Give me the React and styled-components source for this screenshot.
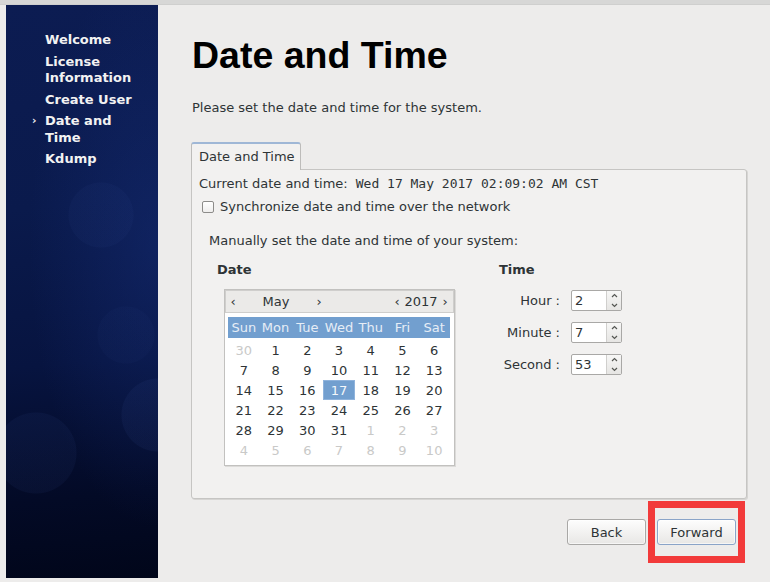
import React from 'react'
import styled, { createGlobalStyle, css } from 'styled-components'

const GlobalStyle = createGlobalStyle`
  html, body {
    margin: 0;
    padding: 0;
    background: #edeceb;
  }
  * { box-sizing: border-box; }
`

const Page = styled.div`
  width: 770px;
  height: 582px;
  overflow: hidden;
  display: flex;
  flex-direction: column;
  background: #edeceb;
  font-family: "DejaVu Sans", "Noto Sans", sans-serif;
  font-size: 13px;
  color: #2e3436;
`

const TopStrip = styled.div`
  height: 5px;
  flex: none;
  background: #d7d7d6;
  border-bottom: 1px solid #cfcfce;
`

const Body = styled.div`
  flex: 1;
  display: flex;
  min-height: 0;
`

const Sidebar = styled.div`
  width: 152px;
  margin: 0 0 4px 6px;
  padding: 27px 0 0 39px;
  background:
    radial-gradient(circle at 30px 448px, rgba(70, 100, 180, 0.07) 0 40px, transparent 41px),
    radial-gradient(circle at 152px 410px, rgba(70, 100, 180, 0.08) 0 36px, transparent 37px),
    radial-gradient(circle at 95px 210px, rgba(70, 100, 180, 0.05) 0 32px, transparent 33px),
    radial-gradient(circle at 120px 330px, rgba(70, 100, 180, 0.04) 0 28px, transparent 29px),
    radial-gradient(ellipse at 100% 42%, rgba(25, 50, 130, 0.4), transparent 60%),
    linear-gradient(175deg, #0c1c52 0%, #0a1a4c 35%, #071440 62%, #030a26 85%, #01061a 100%);
  display: flex;
  flex-direction: column;
  gap: 5px;
`

const NavItem = styled.div`
  position: relative;
  max-width: 100px;
  color: #f2f2f2;
  font-weight: bold;
  font-size: 13px;
  line-height: 16.5px;
  ${p => p.$active && css`
    &::before {
      content: '›';
      position: absolute;
      left: -13px;
      top: 0;
      font-size: 11px;
    }
  `}
`

const Main = styled.div`
  flex: 1;
  padding: 29px 23px 0 34px;
  display: flex;
  flex-direction: column;
`

const Title = styled.h1`
  margin: 0;
  font-family: "Liberation Sans", Arial, sans-serif;
  font-size: 37.5px;
  line-height: 43px;
  font-weight: bold;
  color: #000;
`

const Intro = styled.p`
  margin: 23px 0 0;
  line-height: 16px;
`

const Tabs = styled.div`
  margin: 26px 0 0 -1px;
  display: flex;
`

const Tab = styled.div`
  height: 28px;
  padding: 4px 5px 0 7px;
  line-height: 17px;
  background: #f2f1f0;
  border: 1px solid #bdbcba;
  border-top: 2px solid #9fb7d6;
  border-bottom: none;
  border-radius: 3px 3px 0 0;
  margin-bottom: -1px;
  position: relative;
  z-index: 1;
`

const Panel = styled.div`
  margin-left: -1px;
  height: 330px;
  background: #f2f1f0;
  border: 1px solid #c6c5c3;
  border-radius: 0 3px 3px 3px;
  box-shadow: 1px 1px 0 #d6d5d3;
  padding: 6px 0 0 7px;
`

const Line = styled.div`
  line-height: 16px;
  display: flex;
  align-items: center;
`

const Mono = styled.span`
  font-family: "DejaVu Sans Mono", "Liberation Mono", monospace;
  font-size: 13px;
  margin-left: 8px;
`

const CheckRow = styled(Line)`
  margin-top: 7px;
  padding-left: 3px;
  gap: 6px;
`

const CheckBox = styled.span`
  width: 12px;
  height: 12px;
  border: 1px solid #8d8c8a;
  border-radius: 2px;
  background: linear-gradient(#fff, #efeeed);
`

const Manual = styled.div`
  margin-top: 18px;
  padding-left: 10px;
`

const Columns = styled.div`
  margin-top: 13px;
  padding-left: 8px;
  display: flex;
`

const DateCol = styled.div`
  width: 282px;
`

const Heading = styled.div`
  font-weight: bold;
  line-height: 16px;
`

const CalendarBox = styled.div`
  margin: 11px 0 0 7px;
  width: 231px;
  background: #fff;
  border: 1px solid #c2c1bf;
  box-shadow: 1px 1px 0 #dcdbd9;
`

const CalHeader = styled.div`
  height: 23px;
  background: #ebeae8;
  border: 1px solid #cfcecc;
  display: flex;
  align-items: center;
  justify-content: space-between;
  padding: 0 4px 0 3px;
  color: #2e3436;
`

const Nav = styled.div`
  display: flex;
  align-items: center;
`

const Arrow = styled.span`
  font-size: 13px;
  width: 8px;
  text-align: center;
`

const NavLabel = styled.span`
  width: ${p => p.$w}px;
  text-align: center;
`

const CalBody = styled.div`
  padding: 4px 4px 5px 4px;
`

const Grid = styled.div`
  display: grid;
  grid-template-columns: repeat(7, 1fr);
  grid-auto-rows: 20px;
  margin-left: -1px;
`

const DayNames = styled(Grid)`
  grid-auto-rows: 21px;
  background: #729fcf;
  margin-bottom: 2px;
`

const DayName = styled.div`
  display: flex;
  align-items: center;
  justify-content: center;
  color: #e6edf6;
`

const Day = styled.div`
  display: flex;
  align-items: center;
  justify-content: center;
  color: ${p => (p.$other ? '#c9c9c8' : '#2e3436')};
  ${p => p.$selected && css`
    background: #729fcf;
    color: #f4f7fb;
    border: 1px solid #8fb3dc;
  `}
`

const TimeCol = styled.div`
  display: flex;
  flex-direction: column;
`

const TimeGrid = styled.div`
  margin-top: 12px;
  display: grid;
  grid-template-columns: 61px auto;
  column-gap: 11px;
  row-gap: 11px;
  align-items: center;
`

const TimeLabel = styled.div`
  text-align: right;
`

const Spin = styled.div`
  width: 51px;
  height: 21px;
  display: flex;
  border: 1px solid #a9a8a6;
  border-radius: 2px;
  background: #fff;
`

const SpinValue = styled.div`
  flex: 1;
  padding-left: 3px;
  line-height: 19px;
  color: #2e3436;
`

const SpinArrows = styled.div`
  width: 15px;
  display: flex;
  flex-direction: column;
  border-left: 1px solid #d0cfcd;
  background: linear-gradient(#f7f7f6, #e6e5e3);
`

const SpinBtn = styled.div`
  flex: 1;
  display: flex;
  align-items: center;
  justify-content: center;
`

const Buttons = styled.div`
  margin: 20px 11px 0 0;
  display: flex;
  justify-content: flex-end;
  gap: 11px;
`

const Button = styled.button`
  position: relative;
  width: 79px;
  height: 26px;
  font-family: "DejaVu Sans", sans-serif;
  font-size: 13px;
  color: #2e3436;
  border: 1px solid ${p => (p.$focus ? '#8aa4c8' : '#a9a8a6')};
  border-radius: 3px;
  background: linear-gradient(#fdfdfd, #e8e7e5);
  box-shadow: inset 0 0 0 1px rgba(255, 255, 255, 0.6);
  padding: 0;
`

const Highlight = styled.span`
  position: relative;
  display: inline-flex;
  &::after {
    content: '';
    position: absolute;
    left: -9px;
    right: -9px;
    top: -18px;
    bottom: -18px;
    border: 7px solid #f23a3a;
    pointer-events: none;
  }
`

const Chevron = ({ up }) => (
  <svg width="7" height="5" viewBox="0 0 7 5">
    <polyline
      points={up ? '1,4 3.5,1.5 6,4' : '1,1 3.5,3.5 6,1'}
      fill="none"
      stroke="#555753"
      strokeWidth="1.2"
    />
  </svg>
)

const SpinBox = ({ value }) => (
  <Spin>
    <SpinValue>{value}</SpinValue>
    <SpinArrows>
      <SpinBtn><Chevron up /></SpinBtn>
      <SpinBtn><Chevron /></SpinBtn>
    </SpinArrows>
  </Spin>
)

const weeks = [
  [30, 1, 2, 3, 4, 5, 6],
  [7, 8, 9, 10, 11, 12, 13],
  [14, 15, 16, 17, 18, 19, 20],
  [21, 22, 23, 24, 25, 26, 27],
  [28, 29, 30, 31, 1, 2, 3],
  [4, 5, 6, 7, 8, 9, 10],
]

const App = () => {
  return (
    <>
      <GlobalStyle />
      <Page>
        <TopStrip />
        <Body>
          <Sidebar>
            <NavItem>Welcome</NavItem>
            <NavItem>License Information</NavItem>
            <NavItem>Create User</NavItem>
            <NavItem $active>Date and Time</NavItem>
            <NavItem>Kdump</NavItem>
          </Sidebar>
          <Main>
            <Title>Date and Time</Title>
            <Intro>Please set the date and time for the system.</Intro>
            <Tabs>
              <Tab>Date and Time</Tab>
            </Tabs>
            <Panel>
              <Line>
                Current date and time: <Mono>Wed 17 May 2017 02:09:02 AM CST</Mono>
              </Line>
              <CheckRow>
                <CheckBox />
                Synchronize date and time over the network
              </CheckRow>
              <Manual>
                <Line>Manually set the date and time of your system:</Line>
                <Columns>
                  <DateCol>
                    <Heading>Date</Heading>
                    <CalendarBox>
                      <CalHeader>
                        <Nav>
                          <Arrow>‹</Arrow>
                          <NavLabel $w={78}>May</NavLabel>
                          <Arrow>›</Arrow>
                        </Nav>
                        <Nav>
                          <Arrow>‹</Arrow>
                          <NavLabel $w={40}>2017</NavLabel>
                          <Arrow>›</Arrow>
                        </Nav>
                      </CalHeader>
                      <CalBody>
                        <DayNames>
                          {['Sun', 'Mon', 'Tue', 'Wed', 'Thu', 'Fri', 'Sat'].map(d => (
                            <DayName key={d}>{d}</DayName>
                          ))}
                        </DayNames>
                        <Grid>
                          {weeks.map((week, wi) =>
                            week.map((d, di) => (
                              <Day
                                key={`${wi}-${di}`}
                                $other={(wi === 0 && d > 7) || (wi >= 4 && d < 15)}
                                $selected={wi === 2 && d === 17}
                              >
                                {d}
                              </Day>
                            ))
                          )}
                        </Grid>
                      </CalBody>
                    </CalendarBox>
                  </DateCol>
                  <TimeCol>
                    <Heading>Time</Heading>
                    <TimeGrid>
                      <TimeLabel>Hour :</TimeLabel>
                      <SpinBox value="2" />
                      <TimeLabel>Minute :</TimeLabel>
                      <SpinBox value="7" />
                      <TimeLabel>Second :</TimeLabel>
                      <SpinBox value="53" />
                    </TimeGrid>
                  </TimeCol>
                </Columns>
              </Manual>
            </Panel>
            <Buttons>
              <Button>Back</Button>
              <Highlight>
                <Button $focus>Forward</Button>
              </Highlight>
            </Buttons>
          </Main>
        </Body>
      </Page>
    </>
  )
}

export default App
